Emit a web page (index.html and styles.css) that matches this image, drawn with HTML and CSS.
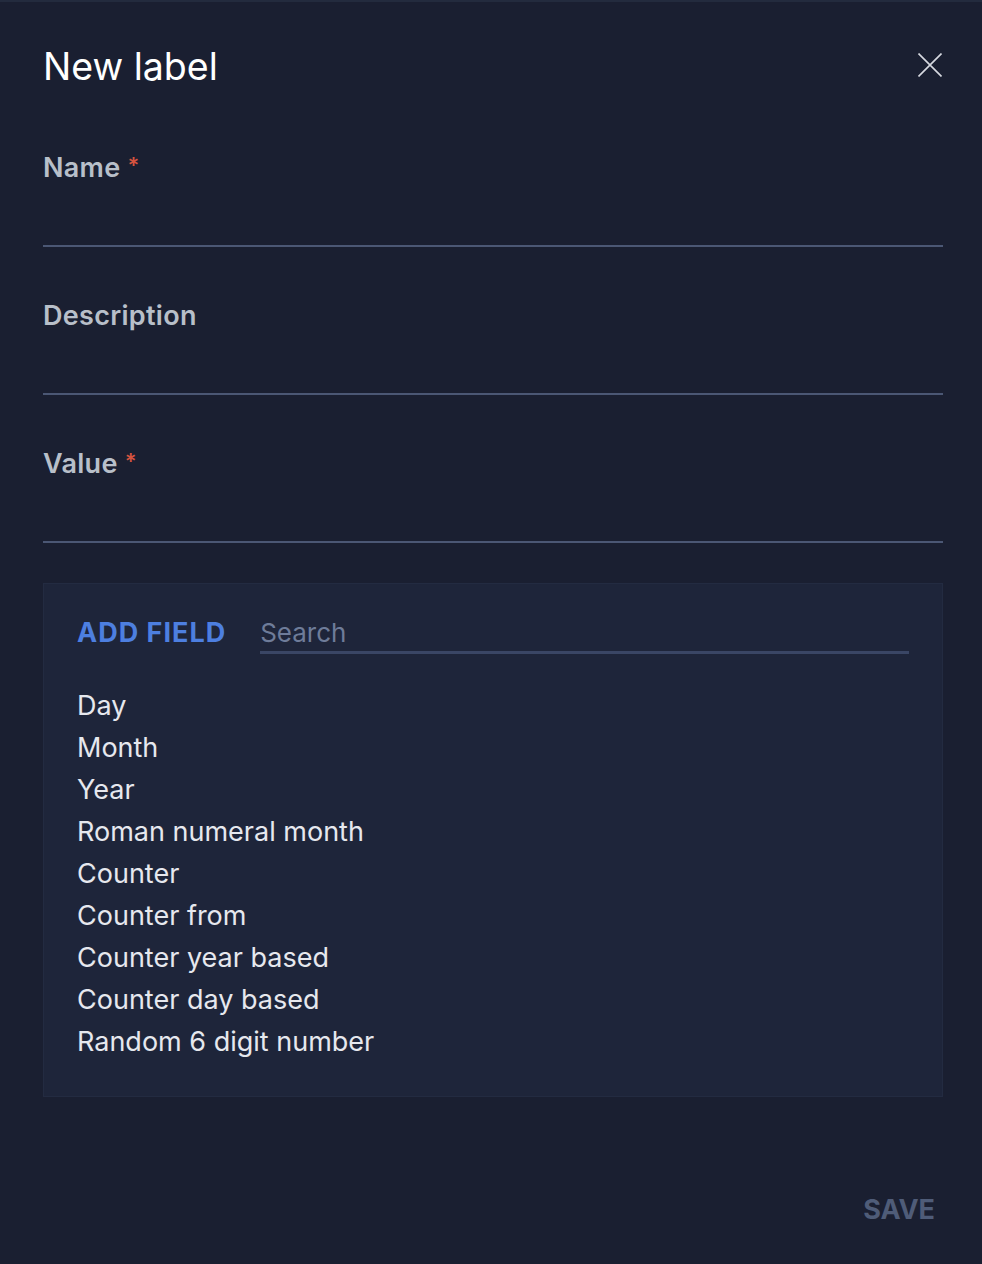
FILE: index.html
```html
<!DOCTYPE html>
<html lang="en">
<head>
<meta charset="utf-8">
<title>New label</title>
<link rel="stylesheet" href="styles.css">
</head>
<body>
<div class="dialog">
  <header class="header">
    <h1 class="title">New label</h1>
    <button class="close" aria-label="Close">
      <svg width="24" height="24" viewBox="0 0 24 24"><path d="M0.5 0.5L23.5 23.5M23.5 0.5L0.5 23.5" stroke="#d6d9e0" stroke-width="1.6" fill="none"/></svg>
    </button>
  </header>

  <div class="field">
    <label class="label">Name <span class="req">*</span></label>
    <div class="input"></div>
  </div>
  <div class="field">
    <label class="label">Description</label>
    <div class="input"></div>
  </div>
  <div class="field">
    <label class="label">Value <span class="req">*</span></label>
    <div class="input"></div>
  </div>

  <section class="panel">
    <div class="panel-head">
      <span class="add">ADD FIELD</span>
      <div class="search">Search</div>
    </div>
    <ul class="list">
      <li>Day</li>
      <li>Month</li>
      <li>Year</li>
      <li>Roman numeral month</li>
      <li>Counter</li>
      <li>Counter from</li>
      <li>Counter year based</li>
      <li>Counter day based</li>
      <li>Random 6 digit number</li>
    </ul>
  </section>

  <footer class="footer">
    <button class="save">SAVE</button>
  </footer>
</div>
</body>
</html>
```

FILE: styles.css
```css
* { box-sizing: border-box; }
html, body { margin: 0; padding: 0; }
body {
  background: #1a1f31;
  font-family: Inter, "Noto Sans", sans-serif;
  border-top: 2px solid #232b3e;
  min-height: 1264px;
}
.dialog {
  padding: 41px 39px 0 43px;
}
.header {
  display: flex;
  justify-content: space-between;
  align-items: flex-start;
}
.title {
  margin: 0;
  font-size: 37.5px;
  line-height: 48px;
  font-weight: 400;
  color: #ffffff;
  letter-spacing: 0;
}
.close {
  background: none;
  border: 0;
  padding: 0;
  margin: 10px 1px 0 0;
  width: 24px;
  height: 24px;
  display: block;
  cursor: pointer;
}
.close svg { display: block; }
.field {
  margin-top: 61px;
}
.field + .field { margin-top: 53px; }
.label {
  display: block;
  font-size: 27px;
  line-height: 32px;
  font-weight: 600;
  color: #b8bfc9;
  letter-spacing: 0.3px;
}
.req {
  color: #d5533f;
  font-size: 22px;
  vertical-align: top;
  position: relative;
  top: -3px;
  margin-left: 0;
}
.input {
  height: 63px;
  border-bottom: 2px solid #4b5774;
}
.panel {
  margin-top: 40px;
  background: #1e253a;
  border: 1px solid #232b41;
  padding: 33px;
}
.panel-head {
  display: flex;
  align-items: flex-start;
  gap: 34px;
}
.add {
  font-size: 27px;
  line-height: 32px;
  font-weight: 700;
  color: #4d7fe0;
  letter-spacing: 1px;
  white-space: nowrap;
}
.search {
  flex: 1;
  height: 37px;
  font-size: 26px;
  line-height: 32px;
  color: #6e7c99;
  border-bottom: 3px solid #3a4665;
}
.list {
  list-style: none;
  margin: 31px 0 0;
  padding: 0;
}
.list li {
  font-size: 27px;
  line-height: 42px;
  color: #e6e8ee;
}
.footer {
  display: flex;
  justify-content: flex-end;
  margin-top: 97px;
}
.save {
  background: none;
  border: 0;
  padding: 0 8px;
  font-family: inherit;
  font-size: 27px;
  line-height: 32px;
  font-weight: 700;
  color: #4f5c78;
  cursor: pointer;
}
```
